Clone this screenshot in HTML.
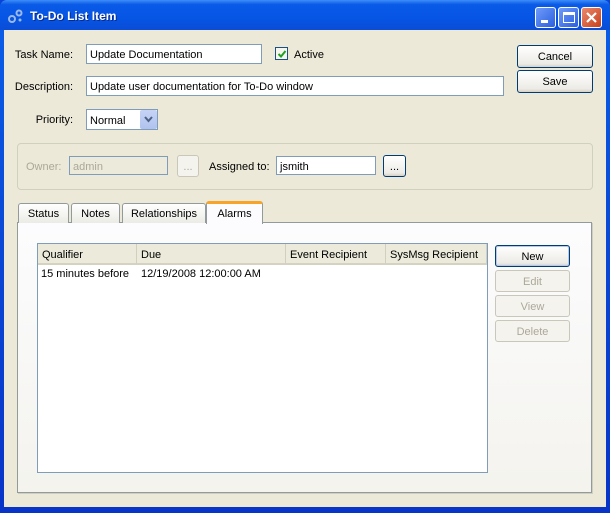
<!DOCTYPE html>
<html><head><style>
*{margin:0;padding:0;box-sizing:border-box}
body{width:610px;height:513px;overflow:hidden;font-family:"Liberation Sans",Arial,sans-serif;font-size:11px;color:#000;background:#0842d6;white-space:nowrap}
.a{position:absolute}
#win{position:absolute;left:0;top:0;width:610px;height:513px;background:linear-gradient(#0a5fea,#0a47d4 50%,#0834c8);border-radius:7px 7px 0 0}
#title{left:0;top:0;width:610px;height:30px;background:linear-gradient(#3d8ef8,#0a5ae8 15%,#0655e4 60%,#0a4dd6);border-radius:7px 7px 0 0}
#title span{position:absolute;left:30px;top:9px;color:#fff;font-weight:bold;font-size:12px;text-shadow:1px 1px #0a2a8a}
#body{left:4px;top:30px;width:602px;height:477px;background:#ece9d8}
.tb{top:7px;width:21px;height:21px;border:1px solid #fff;border-radius:3px;background:linear-gradient(135deg,#6f9bf8,#2a5fe0)}
.inp{background:#fff;border:1px solid #7f9db9;height:20px;padding:3px 3px 0;line-height:15px}
.btn{border:1px solid #003c74;border-radius:3px;background:linear-gradient(#fff,#ecebe6 85%,#d6d0c5);text-align:center;line-height:22px}
.dis{border:1px solid #c9c7ba;border-radius:3px;background:#f4f3ee;color:#aca899;text-align:center;line-height:22px}
.lbl{text-align:right}
.tab{top:203px;height:20px;border:1px solid #919b9c;border-bottom:none;border-radius:3px 3px 0 0;background:linear-gradient(#fff,#ecebe5);text-align:center;line-height:20px}
.hd{top:244px;height:21px;background:#ebeadb;border-right:1px solid #d0cfc2;line-height:22px;padding-left:4px;border-bottom:2px solid #d6d2c2;overflow:hidden}
</style></head><body>
<div id="win">
<div id="title" class="a"><svg class="a" style="left:8px;top:8px" width="16" height="16" viewBox="0 0 16 16"><circle cx="4" cy="11" r="3" fill="none" stroke="#9bb8e8" stroke-width="2"/><circle cx="11" cy="5" r="2.5" fill="none" stroke="#9bb8e8" stroke-width="2"/><circle cx="12" cy="12" r="1.5" fill="#9bb8e8"/></svg><span>To-Do List Item</span></div>
<div class="a tb" style="left:535px"><div class="a" style="left:5px;top:12px;width:7px;height:3px;background:#fff"></div></div>
<div class="a tb" style="left:558px"><div class="a" style="left:4px;top:4px;width:12px;height:11px;border:1px solid #fff;border-top:3px solid #fff"></div></div>
<div class="a tb" style="left:581px;background:linear-gradient(135deg,#e88a6c,#c9401c)"><svg class="a" style="left:3px;top:3px" width="13" height="13"><path d="M2 2L11 11M11 2L2 11" stroke="#fff" stroke-width="2.2"/></svg></div>
<div id="body" class="a"></div>

<div class="a lbl" style="left:3px;top:49px;width:70px">Task Name:</div>
<div class="a inp" style="left:86px;top:44px;width:176px">Update Documentation</div>
<div class="a" style="left:275px;top:47px;width:13px;height:13px;border:1px solid #1c5180;background:#f6f6f0"><svg class="a" style="left:1px;top:1px" width="10" height="10"><path d="M1.5 5L4 7.5L8.5 2" stroke="#21a121" stroke-width="2" fill="none"/></svg></div>
<div class="a" style="left:294px;top:49px">Active</div>
<div class="a btn" style="left:517px;top:45px;width:76px;height:23px">Cancel</div>
<div class="a btn" style="left:517px;top:70px;width:76px;height:23px">Save</div>
<div class="a lbl" style="left:3px;top:81px;width:70px">Description:</div>
<div class="a inp" style="left:86px;top:76px;width:418px">Update user documentation for To-Do window</div>
<div class="a lbl" style="left:10px;top:114px;width:63px">Priority:</div>
<div class="a inp" style="left:86px;top:109px;width:72px;height:21px;padding-top:4px">Normal</div>
<div class="a" style="left:140px;top:110px;width:17px;height:19px;background:linear-gradient(#c6d3f7,#b0c2ee);border-radius:2px"><svg class="a" style="left:4px;top:6px" width="9" height="7"><path d="M1 1L4.5 5L8 1" stroke="#4d6185" stroke-width="2" fill="none"/></svg></div>

<div class="a" style="left:17px;top:143px;width:576px;height:47px;border:1px solid #d0d0bf;border-radius:4px"></div>
<div class="a" style="left:26px;top:161px;color:#aca899">Owner:</div>
<div class="a inp" style="left:69px;top:156px;width:99px;height:19px;background:#ebeadb;color:#aca899">admin</div>
<div class="a dis" style="left:177px;top:155px;width:22px;height:22px">...</div>
<div class="a" style="left:209px;top:161px">Assigned to:</div>
<div class="a inp" style="left:276px;top:156px;width:100px;height:19px">jsmith</div>
<div class="a btn" style="left:383px;top:155px;width:23px;height:22px">...</div>

<div class="a" style="left:17px;top:222px;width:575px;height:271px;border:1px solid #919b9c;background:linear-gradient(#fcfcfe,#f4f3ee);box-shadow:1px 1px 0 #d0cec0"></div>
<div class="a tab" style="left:18px;width:51px">Status</div>
<div class="a tab" style="left:71px;width:49px">Notes</div>
<div class="a tab" style="left:122px;width:84px">Relationships</div>
<div class="a tab" style="left:206px;top:201px;width:57px;height:23px;background:#fcfcfe;border-top:3px solid #f7a429;line-height:20px">Alarms</div>

<div class="a" style="left:37px;top:243px;width:451px;height:230px;border:1px solid #7f9db9;background:#fff"></div>
<div class="a hd" style="left:38px;width:99px">Qualifier</div>
<div class="a hd" style="left:137px;width:149px">Due</div>
<div class="a hd" style="left:286px;width:100px">Event Recipient</div>
<div class="a hd" style="left:386px;width:101px">SysMsg Recipient</div>
<div class="a" style="left:41px;top:268px">15 minutes before</div>
<div class="a" style="left:141px;top:268px">12/19/2008 12:00:00 AM</div>

<div class="a btn" style="left:495px;top:245px;width:75px;height:22px;box-shadow:inset 0 0 0 1px #b4c8f0">New</div>
<div class="a dis" style="left:495px;top:270px;width:75px;height:22px">Edit</div>
<div class="a dis" style="left:495px;top:295px;width:75px;height:22px">View</div>
<div class="a dis" style="left:495px;top:320px;width:75px;height:22px">Delete</div>
</div>
</body></html>
